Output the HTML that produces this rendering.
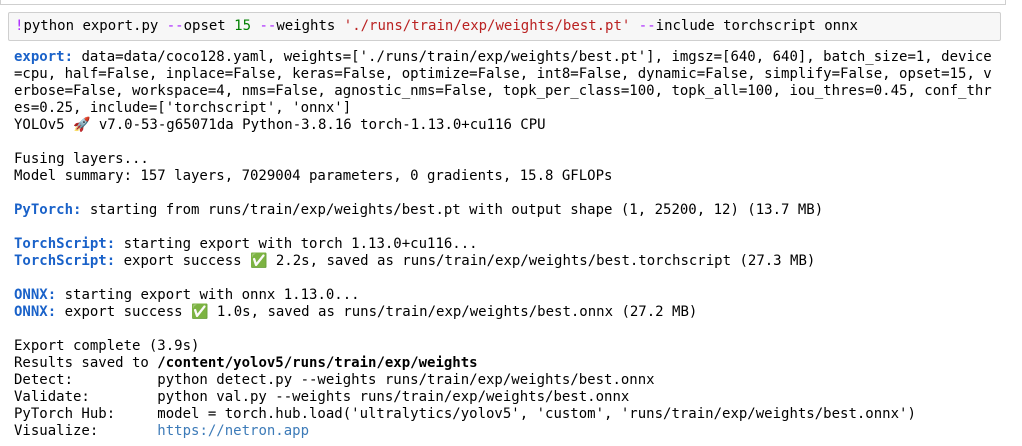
<!DOCTYPE html><html><head><style>
body{margin:0;background:#fff;width:1022px;height:446px;overflow:hidden;font-family:"DejaVu Sans Mono","Liberation Mono",monospace;font-size:14px;color:#000}
.top{position:absolute;left:0;top:-2px;width:1006px;height:7px;border:1px solid #cfcfcf;border-top:none;box-sizing:border-box}
.inp{position:absolute;left:8px;top:12px;width:993px;height:29px;background:#f7f7f7;border:1px solid #cfcfcf;box-sizing:border-box;border-radius:2px}
.inp pre{margin:0;position:absolute;left:6px;top:5px}
pre{font:inherit;line-height:17px;white-space:pre}
.out{position:absolute;left:14px;top:49px;margin:0}
.p{color:#aa22ff}.g{color:#008000}.r{color:#ba2121}
.b{color:#1a62c9;font-weight:bold}
a{color:#3d7bb8;text-decoration:none}
</style></head><body>
<div class="top"></div>
<div class="inp"><pre><span class="p">!</span>python export.py <span class="p">--</span>opset <span class="g">15</span> <span class="p">--</span>weights <span class="r">'./runs/train/exp/weights/best.pt'</span> <span class="p">--</span>include torchscript onnx</pre></div>
<pre class="out"><span class="b">export: </span>data=data/coco128.yaml, weights=['./runs/train/exp/weights/best.pt'], imgsz=[640, 640], batch_size=1, device
=cpu, half=False, inplace=False, keras=False, optimize=False, int8=False, dynamic=False, simplify=False, opset=15, v
erbose=False, workspace=4, nms=False, agnostic_nms=False, topk_per_class=100, topk_all=100, iou_thres=0.45, conf_thr
es=0.25, include=['torchscript', 'onnx']
YOLOv5 🚀 v7.0-53-g65071da Python-3.8.16 torch-1.13.0+cu116 CPU

Fusing layers... 
Model summary: 157 layers, 7029004 parameters, 0 gradients, 15.8 GFLOPs

<span class="b">PyTorch:</span> starting from runs/train/exp/weights/best.pt with output shape (1, 25200, 12) (13.7 MB)

<span class="b">TorchScript:</span> starting export with torch 1.13.0+cu116...
<span class="b">TorchScript:</span> export success ✅ 2.2s, saved as runs/train/exp/weights/best.torchscript (27.3 MB)

<span class="b">ONNX:</span> starting export with onnx 1.13.0...
<span class="b">ONNX:</span> export success ✅ 1.0s, saved as runs/train/exp/weights/best.onnx (27.2 MB)

Export complete (3.9s)
Results saved to <b>/content/yolov5/runs/train/exp/weights</b>
Detect:          python detect.py --weights runs/train/exp/weights/best.onnx 
Validate:        python val.py --weights runs/train/exp/weights/best.onnx 
PyTorch Hub:     model = torch.hub.load('ultralytics/yolov5', 'custom', 'runs/train/exp/weights/best.onnx') 
Visualize:       <a>https://netron.app</a></pre>
</body></html>
